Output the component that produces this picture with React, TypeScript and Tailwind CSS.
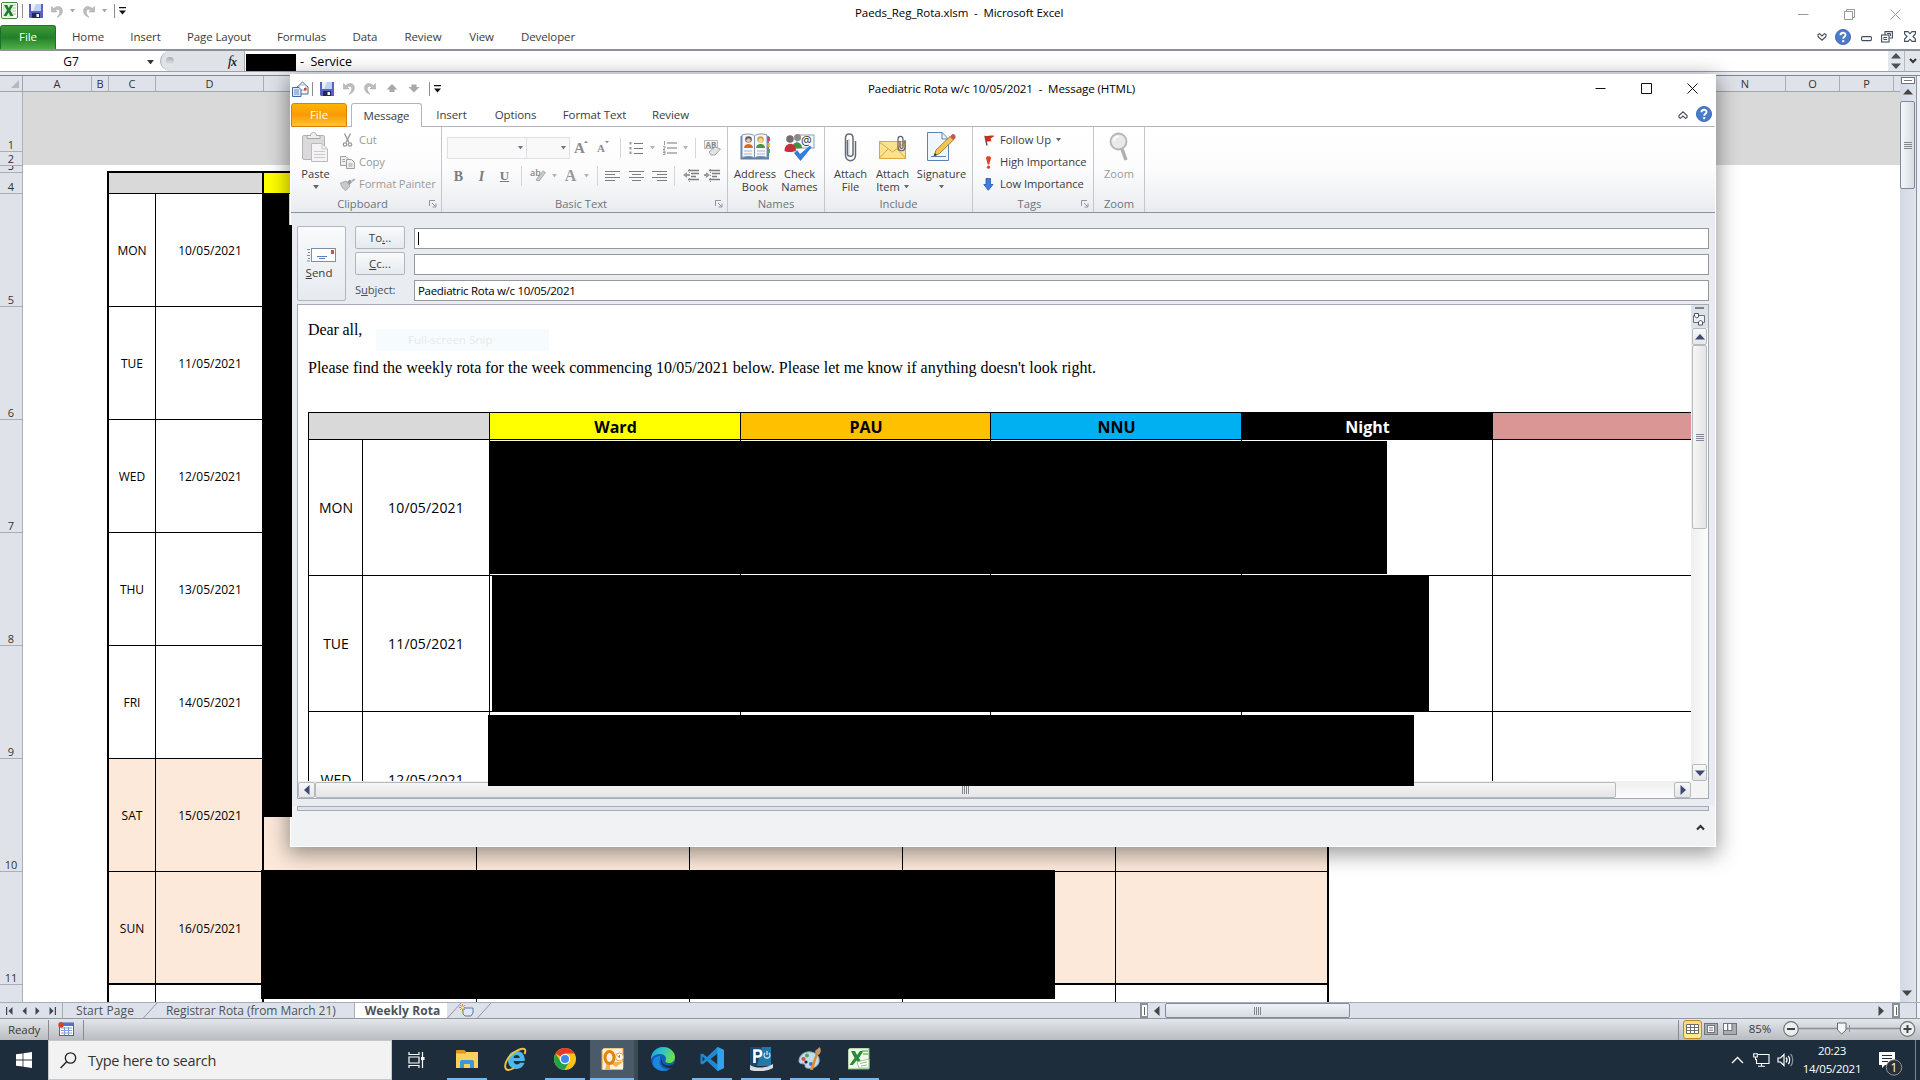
import React from "react";

type Kids = { children?: React.ReactNode };

/* ---------- small shared pieces ---------- */

function Cell({ w, children }: Kids & { w: number }) {
  return (
    <div className="flex h-full shrink-0 items-center justify-center" style={{ width: w }}>
      {children}
    </div>
  );
}

function Down({ color = "#444", w = 6 }: { color?: string; w?: number }) {
  return (
    <svg width={w} height={w / 2 + 1} viewBox="0 0 6 4" className="shrink-0">
      <path d="M0 0H6L3 4Z" fill={color} />
    </svg>
  );
}

function Tri({ dir, color = "#4a4f58", s = 10 }: { dir: "up" | "down" | "left" | "right"; color?: string; s?: number }) {
  const d = { up: "M0 7.500L5 2L10 7.500Z", down: "M0 2.500L5 8L10 2.500Z", left: "M7.500 0L2 5L7.500 10Z", right: "M2.500 0L8 5L2.500 10Z" }[dir];
  return (
    <svg width={s} height={s} viewBox="0 0 10 10" className="shrink-0">
      <path d={d} fill={color} />
    </svg>
  );
}

function Save() {
  return (
    <svg width="14" height="14" viewBox="0 0 14 14" className="shrink-0">
      <path d="M0 0H14V14H1L0 13Z" fill="#5a60c4" />
      <path d="M2 0H12V7H2Z" fill="#e8f0fc" />
      <path d="M7 0H12V7H4Z" fill="#bcd2f2" />
      <path d="M3 9H11V14H3Z" fill="#20265e" />
      <path d="M7.500 10H10V13H7.500Z" fill="#fff" />
    </svg>
  );
}

function Undo({ flip = false }: { flip?: boolean }) {
  return (
    <svg width="12" height="13" viewBox="0 0 12 13" className={flip ? "shrink-0 -scale-x-100" : "shrink-0"}>
      <path d="M.5 1.500V7H6L4.300 5.300C6.500 3.200 8.900 4.200 8.800 7C8.700 9 7.500 10.500 6 12.300C9.500 11.200 11.700 8.500 11.400 5.200C11 1.300 6.300 0 2.700 3.600Z" fill="#bdbdbd" stroke="#a2a2a2" strokeWidth=".5" />
    </svg>
  );
}

function QatMenu() {
  return (
    <svg width="7" height="8" viewBox="0 0 7 8" className="shrink-0">
      <path d="M0 0H7V1.300H0ZM0 3.500H7L3.500 7.500Z" fill="#111" />
    </svg>
  );
}

function VSep({ h = 14, color = "#8d8d8d" }: { h?: number; color?: string }) {
  return <div className="w-px shrink-0" style={{ height: h, background: color }} />;
}

function Help() {
  return (
    <svg width="16" height="16" viewBox="0 0 16 16" className="shrink-0">
      <circle cx="8" cy="8" r="7.600" fill="#4a7bcb" stroke="#3460ae" strokeWidth=".8" />
      <path d="M5.500 6.200C5.500 3 10.500 3 10.500 6C10.500 7.800 8.200 7.800 8.200 9.800" fill="none" stroke="#fff" strokeWidth="1.900" />
      <circle cx="8.200" cy="12.100" r="1.200" fill="#fff" />
    </svg>
  );
}

function Ribbonlet({ up = false }: { up?: boolean }) {
  return (
    <svg width="10" height="8" viewBox="0 0 10 8" className={up ? "shrink-0 rotate-180" : "shrink-0"}>
      <path d="M1 1.500L2.500 0.700L5 3L7.500 0.700L9 1.500V3.500L5 7.200L1 3.500Z" fill="#fff" stroke="#454f5c" strokeWidth="1.100" />
    </svg>
  );
}

function Grip({ vertical = false }: { vertical?: boolean }) {
  return (
    <div className={vertical ? "flex flex-col gap-px" : "flex gap-px"}>
      {[0, 1, 2, 3].map((i) => (
        <div key={i} className={vertical ? "h-px w-2 bg-[#808791]" : "h-2 w-px bg-[#808791]"} />
      ))}
    </div>
  );
}

/* ---------- Excel window ---------- */

function ExcelLogo() {
  return (
    <svg width="17" height="17" viewBox="0 0 17 17" className="shrink-0">
      <rect x=".5" y=".5" width="16" height="16" rx="1.500" fill="#fff" stroke="#3d8a3a" />
      <path d="M2 2H12V15H2Z" fill="#d9efd2" />
      <path d="M12 3H15M12 6H15M12 9H15M12 12H15" stroke="#9ac894" />
      <path d="M3 3H6.200L7.800 6L9.500 3H12.200L9.300 8.200L12.500 14H9.300L7.500 10.600L5.500 14H2.500L6 8.200Z" fill="#1f7a2e" />
    </svg>
  );
}

function ExcelTitle() {
  return (
    <div className="flex h-[25px] items-center bg-white text-[12px]">
      <Cell w={18}><div className="-mt-1"><ExcelLogo /></div></Cell>
      <div className="flex h-full items-center pb-[3px]">
        <Cell w={8}><VSep /></Cell>
        <Cell w={20}><Save /></Cell>
        <Cell w={22}><Undo /></Cell>
        <Cell w={9}><Down color="#a5a5a5" w={5} /></Cell>
        <Cell w={23}><Undo flip /></Cell>
        <Cell w={8}><Down color="#a5a5a5" w={5} /></Cell>
        <Cell w={12}><VSep /></Cell>
        <Cell w={5}><QatMenu /></Cell>
      </div>
      <div className="flex-1 whitespace-pre pl-[730px] text-[11.500px] tracking-[-0.08px] text-black">Paeds_Reg_Rota.xlsm  -  Microsoft Excel</div>
      <div className="flex h-full items-center gap-[35px] pr-[19px] pt-[3px]">
        <svg width="11" height="11" viewBox="0 0 11 11"><path d="M0 5.500H10.500" stroke="#999" /></svg>
        <svg width="11" height="11" viewBox="0 0 11 11"><path d="M.5 2.500H8.500V10.500H.5ZM2.500 2.500V.5H10.500V8.500H8.500" fill="none" stroke="#999" /></svg>
        <svg width="11" height="11" viewBox="0 0 11 11"><path d="M.5 .5L10.500 10.500M10.500 .5L.5 10.500" stroke="#999" /></svg>
      </div>
    </div>
  );
}

const excelTabs: [string, number][] = [
  ["Home", 58], ["Insert", 57], ["Page Layout", 90], ["Formulas", 75], ["Data", 52], ["Review", 64], ["View", 53], ["Developer", 80],
];

function ExcelTabs() {
  return (
    <div className="flex h-6 items-stretch bg-white text-[11.500px] tracking-[-0.1px] text-[#3c3c3c]">
      <div className="flex w-14 items-center justify-center rounded-t-[3px] border border-b-0 border-[#1d6f2b] bg-gradient-to-b from-[#3d9a35] via-[#23802a] to-[#4fae46] pb-px text-white">File</div>
      <div className="w-[3px]" />
      {excelTabs.map(([t, w]) => (
        <Cell key={t} w={w}>{t}</Cell>
      ))}
      <div className="ml-auto flex items-center pr-[4px] pb-px">
        <Ribbonlet />
        <div className="w-[8px]" />
        <Help />
        <div className="w-[10px]" />
        <svg width="11" height="12" viewBox="0 0 11 12"><rect x=".6" y="5.600" width="9.800" height="4" rx="1" fill="#fff" stroke="#454f5c" strokeWidth="1.100" /></svg>
        <div className="w-[9px]" />
        <svg width="12" height="12" viewBox="0 0 12 12"><path d="M4 4V.6H11.400V7H8" fill="#fff" stroke="#454f5c" strokeWidth="1.100" /><rect x=".6" y="4" width="7.400" height="7" fill="#fff" stroke="#454f5c" strokeWidth="1.100" /><rect x="3" y="6.500" width="2.600" height="2" fill="none" stroke="#454f5c" /><path d="M6 2.500H9.500V5" fill="none" stroke="#454f5c" /></svg>
        <div className="w-[11px]" />
        <svg width="12" height="11" viewBox="0 0 12 11"><path d="M.6 .6H4L6 2.800L8 .6H11.400V3L9 5.500L11.400 8V10.400H8L6 8.200L4 10.400H.6V8L3 5.500L.6 3Z" fill="#fff" stroke="#454f5c" strokeWidth="1.100" /></svg>
      </div>
    </div>
  );
}

function FormulaBar() {
  return (
    <div className="flex h-[27px] shrink-0 flex-col border-t-2 border-[#8c9098] bg-[#e8ebf0]">
      <div className="flex h-[21px] items-stretch border-b border-[#9da1a5] bg-white text-[13px] text-black">
        <div className="flex w-[160px] items-center pt-[2px]">
          <div className="w-[147px] pr-[5px] text-center text-[12px]">G7</div>
          <Down color="#333" w={7} />
        </div>
        <div className="flex w-[85px] items-center justify-between rounded-l-[10px] border-x border-[#a8adb4] bg-[#dfe2e7] pl-[5px] pr-[7px]">
          <div className="h-2 w-2 rounded-full bg-gradient-to-b from-[#a9adb3] to-[#e6e8eb]" />
          <div className="font-['Liberation_Serif'] text-[15px] italic leading-none text-[#222]">f<span className="-ml-px text-[12px] font-bold">x</span></div>
        </div>
        <div className="ml-px mt-[3px] h-[17px] w-[50px] bg-black" />
        <div className="flex items-center whitespace-pre pl-[4px] pt-[2px] text-[12.500px]">-  Service</div>
        <div className="ml-auto flex w-4 flex-col items-center justify-between bg-[#e1e5ec]"><Tri dir="up" /><Tri dir="down" /></div>
        <div className="flex w-4 items-center justify-center border-l border-[#b5bac2] bg-[#e1e5ec]">
          <svg width="8" height="6" viewBox="0 0 8 6"><path d="M1 1L4 4L7 1" fill="none" stroke="#333" strokeWidth="2" /></svg>
        </div>
      </div>
    </div>
  );
}

const cols: [string, number][] = [["A", 69], ["B", 17], ["C", 47], ["D", 108]];

function ColumnHeaders() {
  return (
    <div className="flex h-[17px] shrink-0 border-y border-t-[#7f8791] border-b-[#9fa5ad] bg-[#dfe3e9] text-[11px] text-[#333]">
      <div className="flex w-[23px] items-end justify-end border-r border-[#9fa5ad] p-[3px]">
        <svg width="8" height="8" viewBox="0 0 8 8"><path d="M8 0V8H0Z" fill="#b4b9c1" /></svg>
      </div>
      {cols.map(([c, w]) => (
        <div key={c} className="flex items-center justify-center border-r border-[#a9afb7] pt-[2px]" style={{ width: w }}>{c}</div>
      ))}
      <div className="flex-1" />
      <div className="flex w-[81px] items-center justify-center border-r border-[#a9afb7] pt-[2px]">N</div>
      <div className="flex w-[54px] items-center justify-center border-r border-[#a9afb7] pt-[2px]">O</div>
      <div className="flex w-[54px] items-center justify-center border-r border-[#a9afb7] pt-[2px]">P</div>
      <div className="w-[6px]" />
    </div>
  );
}

function RowHead({ n, h }: { n?: string; h: number }) {
  return (
    <div className="flex w-[23px] shrink-0 items-end justify-center overflow-hidden border-b border-r border-[#a9afb7] bg-[#dfe3e9] text-[11px] leading-[13px] text-[#333]" style={{ height: h }}>
      {n}
    </div>
  );
}

const days: { n: string; d: string; date: string; off?: boolean }[] = [
  { n: "5", d: "MON", date: "10/05/2021" },
  { n: "6", d: "TUE", date: "11/05/2021" },
  { n: "7", d: "WED", date: "12/05/2021" },
  { n: "8", d: "THU", date: "13/05/2021" },
  { n: "9", d: "FRI", date: "14/05/2021" },
  { n: "10", d: "SAT", date: "15/05/2021", off: true },
  { n: "11", d: "SUN", date: "16/05/2021", off: true },
];

function Sheet() {
  return (
    <div className="flex-1 overflow-hidden bg-white">
      <div className="flex bg-[#d9d9d9]"><RowHead n="1" h={60} /></div>
      <div className="flex h-[14px]">
        <RowHead n="2" h={14} />
        <div className="h-[13px] flex-1 bg-[#d9d9d9]" />
      </div>
      <div className="flex h-[7px]">
        <RowHead n="3" h={7} />
        <div className="ml-[84px] mt-[5px] w-[1222px] bg-black" />
      </div>
      <div className="flex h-[21px]">
        <RowHead n="4" h={21} />
        <div className="ml-[84px] flex w-[1222px] border-x-2 border-b border-black">
          <div className="w-[155px] border-r-2 border-black bg-[#d9d9d9]" />
          <div className="w-[213px] border-r border-black bg-[#ffff00]" />
          <div className="w-[213px] border-r border-black bg-[#ffc000]" />
          <div className="w-[213px] border-r border-black bg-[#00b0f0]" />
          <div className="flex-1 bg-black" />
        </div>
      </div>
      {days.map((r) => (
        <div key={r.n} className="flex h-[113px]">
          <RowHead n={r.n} h={113} />
          <div className={`ml-[84px] flex w-[1222px] border-x-2 border-black text-[12px] tracking-[0px] text-black ${r.off ? "bg-[#fce9da]" : ""} ${r.n === "11" ? "border-b-2" : "border-b"}`}>
            <div className="flex w-[47px] items-center justify-center border-r border-black pt-[2px]">{r.d}</div>
            <div className="flex w-[108px] items-center justify-center border-r-2 border-black pl-[2px] pt-[2px]">{r.date}</div>
            <div className="w-[213px] border-r border-black" />
            <div className="w-[213px] border-r border-black" />
            <div className="w-[213px] border-r border-black" />
            <div className="w-[213px] border-r border-black" />
          </div>
        </div>
      ))}
      <div className="flex h-[20px]">
        <RowHead h={20} />
        <div className="ml-[84px] flex w-[1222px] border-x-2 border-black">
          <div className="w-[47px] border-r border-black" />
          <div className="w-[108px] border-r-2 border-black" />
          <div className="w-[213px] border-r border-black" />
          <div className="w-[213px] border-r border-black" />
          <div className="w-[213px] border-r border-black" />
          <div className="w-[213px] border-r border-black" />
        </div>
      </div>
    </div>
  );
}

function ExcelVScroll() {
  return (
    <div className="flex w-5 shrink-0 border-t border-[#7f8791] bg-[#eff1f4]">
      <div className="flex w-[17px] flex-col items-center border-r border-[#8b93a3] bg-gradient-to-r from-[#d3d9e4] to-[#dfe3ec]">
        <div className="mt-px h-[7px] w-[14px] border border-[#6f7680] bg-white"><div className="mx-[2px] mt-[2px] h-px bg-[#777]" /></div>
        <div className="mt-[3px] h-[14px]"><Tri dir="up" color="#444" /></div>
        <div className="flex h-[88px] w-[15px] items-center justify-center self-start rounded-[2px] border border-[#7f8a9c] bg-gradient-to-r from-[#f4f6f9] to-[#d8dce3]"><Grip vertical /></div>
        <div className="mb-1 mt-auto pr-[2px]"><Tri dir="down" color="#444" /></div>
      </div>
    </div>
  );
}

function SheetNav({ d, bar }: { d: "left" | "right"; bar?: boolean }) {
  return (
    <svg width="8" height="8" viewBox="0 0 8 8" className={d === "left" ? "shrink-0" : "shrink-0 rotate-180"}>
      <path d="M6.500 0V8L2.500 4Z" fill="#3f4650" />
      {bar && <path d="M.6 0V8" stroke="#3f4650" strokeWidth="1.200" />}
    </svg>
  );
}

function TabEdge() {
  return (
    <svg width="14" height="16" viewBox="0 0 14 16" className="shrink-0">
      <path d="M0 15.500L14 0" stroke="#8e96a3" fill="none" />
    </svg>
  );
}

function SheetTabs() {
  return (
    <div className="flex h-[16px] shrink-0 items-stretch border-t border-[#a5adb9] bg-[#dde2ea] text-[12px] text-[#4d5259]">
      <div className="flex w-[63px] items-center justify-between border-r border-[#a5adb9] pl-[6px] pr-[6px]">
        <SheetNav d="left" bar /><SheetNav d="left" /><SheetNav d="right" /><SheetNav d="right" bar />
      </div>
      <div className="flex w-[80px] items-center pl-[13px] tracking-[0.1px]"><span className="whitespace-nowrap">Start Page</span></div>
      <TabEdge />
      <div className="flex w-[198px] items-center border-r border-[#a5adb9] pl-[9px]"><span className="whitespace-nowrap tracking-[-0.07px]">Registrar Rota (from March 21)</span></div>
      <div className="flex w-[92px] items-center justify-center bg-white pl-[3px] font-bold"><span className="whitespace-nowrap tracking-[0.1px]">Weekly Rota</span></div>
      <TabEdge />
      <svg width="16" height="14" viewBox="0 0 16 14" className="ml-[-2px] mt-px">
        <path d="M4 4H14V9L12 12H6L4 10Z" fill="#dfe8f7" stroke="#5d79ad" />
        <path d="M3.500 0V7M0 3.500H7M1 1L6 6M6 1L1 6" stroke="#d98d1c" />
        <circle cx="3.500" cy="3.500" r="1.200" fill="#fff3c8" />
      </svg>
      <div className="w-[2px]" />
      <TabEdge />
      <div className="flex-1" />
      <div className="flex w-[8px] items-center justify-center border-2 border-r border-[#8b8f99] bg-white"><div className="h-2 w-px bg-[#666]" /></div>
      <div className="flex w-[17px] items-center justify-center"><Tri dir="left" color="#444" /></div>
      <div className="flex w-[185px] items-center justify-center rounded-[2px] border border-[#7f8a9c] bg-gradient-to-b from-[#eef3f8] to-[#d8dbe2]"><Grip /></div>
      <div className="w-[526px]" />
      <div className="flex w-[16px] items-center"><Tri dir="right" color="#444" /></div>
      <div className="flex w-[8px] items-center justify-center border-2 border-[#8b8f99] bg-white"><div className="h-2 w-px bg-[#666]" /></div>
      <div className="w-[17px] border-r border-[#8b93a3]" />
      <div className="w-[3px] bg-[#eff1f4]" />
    </div>
  );
}

function StatusBar() {
  return (
    <div className="flex h-[22px] shrink-0 items-center border-t border-[#8f97a3] bg-gradient-to-b from-[#e3e6ea] to-[#b9bdc2] text-[11.500px] tracking-[-0.1px] text-[#3a3a3a]">
      <div className="w-[48px] pl-2">Ready</div>
      <VSep h={20} color="#858b92" />
      <div className="flex w-[34px] justify-center pb-px">
        <svg width="16" height="14" viewBox="0 0 16 14"><rect x="1.500" y="1" width="14" height="12.500" fill="#fff" stroke="#3f69b3" /><path d="M1.500 1H15.500V4H1.500Z" fill="#4b78c4" /><path d="M3 6H14M3 8.500H14M3 11H14M6.500 5V13M10.500 5V13" stroke="#7f9fd3" /><circle cx="3" cy="3" r="2.700" fill="#d5431f" /></svg>
      </div>
      <VSep h={20} color="#858b92" />
      <div className="flex-1" />
      <VSep h={20} color="#858b92" />
      <div className="flex items-center pb-px">
        <div className="ml-[4px] flex h-[19px] w-[19px] items-center justify-center rounded-[3px] border border-[#c0882a] bg-gradient-to-b from-[#fbd777] to-[#fff08a]">
          <svg width="13" height="10" viewBox="0 0 13 10"><path d="M.5 .5H12.500V9.500H.5ZM.5 3.500H12.500M.5 6.500H12.500M4.500 .5V9.500M8.500 .5V9.500" fill="#fff" stroke="#6c6c6c" /></svg>
        </div>
        <svg width="14" height="12" viewBox="0 0 14 12" className="ml-[2px]"><rect x=".5" y=".5" width="13" height="11" fill="#a9adb2" stroke="#70757b" /><rect x="3.500" y="2.500" width="7" height="7" fill="#fff" stroke="#70757b" /><path d="M5 4.500H9M5 6H9M5 7.500H9" stroke="#888" strokeWidth=".8" /></svg>
        <svg width="14" height="12" viewBox="0 0 14 12" className="ml-[5px]"><rect x=".5" y=".5" width="13" height="11" fill="#a9adb2" stroke="#70757b" /><path d="M1 1H4V7H1ZM5.500 1H8.500V7H5.500Z" fill="#fff" /><path d="M4.500 1V7.500M9 1V7.500H1" stroke="#70757b" fill="none" /></svg>
        <div className="w-[46px] text-center">85%</div>
        <svg width="137" height="18" viewBox="0 0 137 18" className="shrink-0">
          <path d="M16 8.500H118" stroke="#8c9098" strokeWidth="1.400" /><path d="M66.500 5V12" stroke="#8c9098" />
          <circle cx="8" cy="9" r="7.300" fill="#eceef0" stroke="#6f747a" strokeWidth="1.200" /><path d="M4 9H12" stroke="#444" strokeWidth="2" />
          <path d="M54.500 3H63V10L58.700 14L54.500 10Z" fill="#f4f5f6" stroke="#63686e" />
          <circle cx="124.500" cy="9" r="7.300" fill="#eceef0" stroke="#6f747a" strokeWidth="1.200" /><path d="M120.500 9H128.500M124.500 5V13" stroke="#444" strokeWidth="2" />
        </svg>
      </div>
    </div>
  );
}

/* ---------- Taskbar ---------- */

function TaskIcon({ w, children, bar, active }: Kids & { w: number; bar?: number; active?: boolean }) {
  return (
    <div className={`flex h-full flex-col items-center ${active ? "bg-[#4b5a68]" : ""}`} style={{ width: w }}>
      <div className="flex flex-1 items-center justify-center">{children}</div>
      <div className={bar ? "h-[2px] bg-[#76b9ed]" : "h-[2px]"} style={{ width: bar ?? 1 }} />
    </div>
  );
}

function Taskbar() {
  return (
    <div className="flex h-[40px] shrink-0 items-stretch bg-[#1e2d3c] text-white">
      <Cell w={48}>
        <svg width="16" height="16" viewBox="0 0 16 16"><path d="M0 2.300L6.600 1.400V7.600H0ZM7.400 1.300L16 0V7.600H7.400ZM0 8.400H6.600V14.600L0 13.700ZM7.400 8.400H16V16L7.400 14.700Z" fill="#fff" /></svg>
      </Cell>
      <div className="flex w-[344px] items-center border border-[#c5c8cb] bg-[#f2f2f2]">
        <svg width="17" height="17" viewBox="0 0 17 17" className="ml-[11px]"><circle cx="10.500" cy="6" r="5.200" fill="none" stroke="#222" strokeWidth="1.300" /><path d="M6.700 9.800L.6 16" stroke="#222" strokeWidth="1.400" /></svg>
        <div className="ml-[11px] pt-[2px] text-[14.500px] tracking-[-0.28px] text-[#333]">Type here to search</div>
      </div>
      <Cell w={48}>
        <svg width="17" height="16" viewBox="0 0 17 16" fill="none" stroke="#fff" strokeWidth="1.200"><path d="M1 0V2.500H11V0M1 16V13.500H11V16M1 5H11V11H1ZM14.500 0V16" /><path d="M13 5H16.500V8H13Z" fill="#fff" stroke="none" /></svg>
      </Cell>
      <div className="w-[7px]" />
      <TaskIcon w={40} bar={40}>
        <svg width="22" height="18" viewBox="0 0 22 18"><path d="M0 1L1 0H8L10 2H22V18H0Z" fill="#fbd15b" /><path d="M0 1L1 0H8L10 2V3.500H0Z" fill="#d79b1e" /><path d="M4 18V11L5.500 10H16.500L18 11V18H14V14H8V18Z" fill="#3f97d8" /></svg>
      </TaskIcon>
      <div className="w-[9px]" />
      <TaskIcon w={40}>
        <svg width="24" height="24" viewBox="0 0 24 24"><path d="M4 13C4 7 8 4 12.500 4C18 4 21 8 20.800 14H9.500C9.800 18 14.500 18.500 16 15.800H20.500C19 20 16 22 12.500 22C7.500 22 4 18.500 4 13ZM9.500 11H15.800C15.500 7 9.800 7 9.500 11Z" fill="#4db8ee" /><path d="M20.500 7C24 -1 16 1.500 10 5.500C3 10.500 -.5 18 2 22C4.500 24.500 9 21.500 10 21" fill="none" stroke="#f1c33c" strokeWidth="1.900" /></svg>
      </TaskIcon>
      <div className="w-[9px]" />
      <TaskIcon w={40} bar={40}>
        <svg width="22" height="22" viewBox="0 0 22 22"><circle cx="11" cy="11" r="11" fill="#fbc116" /><path d="M11 11L1.500 5.500A11 11 0 0 1 20.500 5.500H11Z" fill="#e33b2e" /><path d="M1.500 5.500A11 11 0 0 0 10.300 22L15.500 13.500L6.500 13.500Z" fill="#24a04b" /><circle cx="11" cy="11" r="5.200" fill="#fff" /><circle cx="11" cy="11" r="4" fill="#4285f4" /></svg>
      </TaskIcon>
      <div className="w-[5px]" />
      <TaskIcon w={44} bar={44} active>
        <svg width="23" height="22" viewBox="0 0 23 22"><path d="M1 2L3 0H22V20L20 22H1Z" fill="#f7efe0" stroke="#e2a233" /><path d="M6 14H22V22H4Z" fill="#f3b24a" /><path d="M9 15L15 19L22 14V21H9Z" fill="#fff5dd" /><ellipse cx="8.500" cy="9.500" rx="4.500" ry="6" fill="none" stroke="#e08412" strokeWidth="3" /><circle cx="18.500" cy="9" r="4" fill="#fff" stroke="#e2a233" /><path d="M18.500 7V9.500L16.500 8" fill="none" stroke="#c27a15" /></svg>
      </TaskIcon>
      <div className="w-1 bg-[#3d4a56]" />
      <div className="w-[5px]" />
      <TaskIcon w={40}>
        <svg width="24" height="24" viewBox="0 0 24 24"><defs><linearGradient id="eg" x1="0" y1="0" x2="1" y2=".4"><stop offset="0" stopColor="#1b9de2" /><stop offset=".5" stopColor="#2fc3c8" /><stop offset="1" stopColor="#6be04a" /></linearGradient></defs><circle cx="12" cy="12" r="12" fill="#0f5fb8" /><path d="M0 11C1 4 6 0 12 0C19 0 24 5 24 10C24 14 21 16 18 16C15 16 14 15 14.500 13.500C16 11 14 7 9.500 7C5 7 1.500 9 0 12Z" fill="url(#eg)" /><path d="M9 12C7 17 11 23 18 22.500C14 25 5 24 2 18C1 11 6 8.500 9.500 9C8 10 9 11 9 12Z" fill="#1c86dc" /><path d="M11 11C10 13 11 18 16 18.500C19 18.700 21 18 22.500 17L23.500 18L20 21C16 21 15 20.500 14.500 20C10 18 9 14 11 11Z" fill="#1e2d3c" /></svg>
      </TaskIcon>
      <div className="w-[9px]" />
      <TaskIcon w={40} bar={40}>
        <svg width="24" height="24" viewBox="0 0 24 24"><path d="M17.500 0L24 3V21L17.500 24L7 14L2.500 17.500L.5 16.500V7.500L2.500 6.500L7 10ZM17.500 6.500L10.500 12L17.500 17.500ZM2.500 9.500V14.500L5 12Z" fill="#1f8ad2" fillRule="evenodd" /><path d="M17.500 0L24 3V21L17.500 24Z" fill="#2fa3f0" /></svg>
      </TaskIcon>
      <div className="w-[9px]" />
      <TaskIcon w={40} bar={40}>
        <svg width="24" height="24" viewBox="0 0 24 24"><path d="M1 0H22V19H1Z" fill="#2577a8" /><path d="M1 0H13L8 19H1Z" fill="#154a72" /><path d="M1 18C8 22 18 21 24 17V21C17 25 6 25 1 23Z" fill="#d8dcdf" /><path d="M5.500 16V3.500H9.500C13 3.500 13 9.500 9.500 9.500H6" fill="none" stroke="#fff" strokeWidth="2.600" /><path d="M16 6A3 3 0 1 0 20 6M18 4V8" fill="none" stroke="#c3e2f2" strokeWidth="1.300" /></svg>
      </TaskIcon>
      <div className="w-[9px]" />
      <TaskIcon w={40} bar={40}>
        <svg width="24" height="24" viewBox="0 0 24 24"><path d="M1 14C1 8 7 4 13 5C19 6 22 10 21 15C20 20 14 22 9 21C6 20.500 8 17.500 6 17C4 16.500 1 17 1 14Z" fill="#bfdcec" stroke="#8fb0c6" /><circle cx="5.500" cy="12" r="2" fill="#e04a3a" /><circle cx="9" cy="8.500" r="2" fill="#56a93f" /><circle cx="8" cy="15" r="1.600" fill="#223" /><circle cx="13" cy="17" r="2" fill="#3277cf" /><path d="M12 23L18 6L20 7L15 23Z" fill="#e08a2b" /><path d="M17.500 6C16 2 20 3 21 0C24 2 23 6 20.500 8Z" fill="#c59a6b" /></svg>
      </TaskIcon>
      <div className="w-[9px]" />
      <TaskIcon w={40} bar={40}>
        <svg width="22" height="22" viewBox="0 0 22 22"><path d="M0 2L2 0H21V21H0Z" fill="#eef7ea" stroke="#7cb86c" /><path d="M3 3H7L9 7L12 3H15.500L11 10L15 17H11L8.500 12.500L5 17H1.500L6.500 10Z" fill="#2b8a37" /><path d="M14 3H20M15 6H20" stroke="#7cb86c" strokeWidth="1.500" /><path d="M9 14L21 11V20H11Z" fill="#fff" stroke="#9cc791" /><path d="M12 15.500L19 14M13 18L19 17" stroke="#8fbf84" /></svg>
      </TaskIcon>
      <div className="flex-1" />
      <svg width="13" height="8" viewBox="0 0 13 8" className="mt-[16px]"><path d="M1 7L6.500 1.500L12 7" fill="none" stroke="#fff" strokeWidth="1.400" /></svg>
      <svg width="17" height="14" viewBox="0 0 17 14" className="ml-[9px] mt-[13px]" fill="none" stroke="#fff" strokeWidth="1.100"><path d="M5 1.500H16V10.500H3.500V6M8.500 10.500V13M5 13.300H12" /><path d="M.7 .7H4.300V4H.7ZM2.500 4V7" /></svg>
      <svg width="17" height="14" viewBox="0 0 17 14" className="ml-[7px] mt-[13px]" fill="none" stroke="#fff" strokeWidth="1.200"><path d="M1 5H3.500L7 1.500V12.500L3.500 9H1Z" /><path d="M9 4.500C10.300 6 10.300 8 9 9.500M11.200 2.800C13.200 5 13.200 9 11.200 11.200" /><path d="M13.500 1C16.500 4 16.500 10 13.500 13" stroke="#8a949d" /></svg>
      <div className="ml-[8px] flex w-[60px] flex-col items-center pt-[2px] text-[11.500px] leading-[18px] tracking-[-0.25px]"><span>20:23</span><span>14/05/2021</span></div>
      <svg width="26" height="26" viewBox="0 0 26 26" className="ml-[16px] mt-[11px]"><path d="M1 1H17V14H7L4 17V14H1Z" fill="#fff" /><path d="M4 4.500H14M4 7.500H14M4 10.500H10" stroke="#1e2d3c" /><circle cx="16" cy="16.500" r="7.700" fill="#2b2f33" stroke="#8d949a" /><text x="16" y="20.800" textAnchor="middle" fontSize="12" fill="#fff">1</text></svg>
      <div className="ml-[11px] w-px bg-[#7d8790]" />
      <div className="w-1" />
    </div>
  );
}

/* ---------- Outlook message window ---------- */

function MsgTitle() {
  return (
    <div className="flex h-[29px] shrink-0 items-center">
      <Cell w={18}>
        <svg width="17" height="16" viewBox="0 0 17 16"><path d="M5 6L10.500 1L16 6V13H5Z" fill="#f3f7fc" stroke="#4f6a93" /><path d="M7 4H14V9H7Z" fill="#fff" stroke="#9bb0cd" /><path d="M.5 6.500H7L9 8.500V15.500H.5Z" fill="#dbe8f8" stroke="#4467a0" /><path d="M2 9H7M2 11H7M2 13H7" stroke="#6e8cc0" /><rect x="12" y="7" width="2.500" height="2.500" fill="#d44b2a" /></svg>
      </Cell>
      <Cell w={6}><VSep /></Cell>
      <Cell w={24}><Save /></Cell>
      <Cell w={20}><Undo /></Cell>
      <Cell w={22}><Undo flip /></Cell>
      <Cell w={22}><svg width="12" height="9" viewBox="0 0 12 9"><path d="M6 0L11.500 5.500H8.500V8H3.500V5.500H.5Z" fill="#a9a9a9" /></svg></Cell>
      <Cell w={22}><svg width="12" height="9" viewBox="0 0 12 9"><path d="M6 8.500L11.500 3H8.500V.5H3.500V3H.5Z" fill="#a9a9a9" /></svg></Cell>
      <Cell w={9}><VSep /></Cell>
      <Cell w={7}><QatMenu /></Cell>
      <div className="flex-1 whitespace-pre pl-[427px] text-[11.600px] tracking-[-0.1px] text-black">Paediatric Rota w/c 10/05/2021  -  Message (HTML)</div>
      <div className="flex gap-[35px] pr-[17px]">
        <svg width="11" height="11" viewBox="0 0 11 11"><path d="M.5 5.500H10.500" stroke="#111" /></svg>
        <svg width="11" height="11" viewBox="0 0 11 11"><path d="M.5 .5H10.500V10.500H.5Z" fill="none" stroke="#111" /></svg>
        <svg width="11" height="11" viewBox="0 0 11 11"><path d="M.5 .5L10.500 10.500M10.500 .5L.5 10.500" stroke="#111" /></svg>
      </div>
    </div>
  );
}

function MsgTabs() {
  return (
    <div className="flex h-[24px] shrink-0 items-stretch text-[11.500px] text-[#3c3c3c]">
      <div className="flex w-[56px] items-center justify-center rounded-t-[3px] border border-[#de7c0c] bg-gradient-to-b from-[#fcb500] via-[#f99a06] to-[#ffc629] text-white">File</div>
      <div className="w-1 border-b border-[#b2b5b9]" />
      <div className="flex w-[71px] items-center justify-center rounded-t-[3px] border border-b-0 border-[#b2b5b9]"><span className="tracking-[-0.15px]">Message</span></div>
      <div className="flex flex-1 items-center border-b border-[#b2b5b9] tracking-[-0.1px]">
        <Cell w={59}>Insert</Cell>
        <Cell w={69}>Options</Cell>
        <Cell w={89}>Format Text</Cell>
        <Cell w={63}>Review</Cell>
        <div className="flex-1" />
        <Ribbonlet up />
        <div className="w-[8px]" />
        <div className="-mt-[2px]"><Help /></div>
        <div className="w-[3px]" />
      </div>
    </div>
  );
}

function Launcher() {
  return (
    <svg width="8" height="8" viewBox="0 0 8 8" className="shrink-0"><path d="M.5 6V.5H6M3 3L6.500 6.500M7 3.500V7H3.500" fill="none" stroke="#8f959c" /></svg>
  );
}

function Group({ w, label, launcher, children }: Kids & { w: number; label: string; launcher?: boolean }) {
  return (
    <div className="flex h-full shrink-0 flex-col border-r border-[#c3c7cc]" style={{ width: w }}>
      <div className="flex h-[69px]">{children}</div>
      <div className="flex h-[16px] items-center text-[11.200px] text-[#6b7380]">
        <div className={launcher ? "flex-1 pr-[4px] text-center" : "flex-1 text-center"}>{label}</div>
        {launcher && <div className="ml-[-9px] mr-[4px]"><Launcher /></div>}
      </div>
    </div>
  );
}

function Big({ w, icon, a, b, grey }: { w: number; icon: React.ReactNode; a: string; b?: React.ReactNode; grey?: boolean }) {
  return (
    <div className={`flex flex-col items-center text-[11.100px] leading-[13px] tracking-[0px] ${grey ? "text-[#9a9a9a]" : "text-[#3b3b3b]"}`} style={{ width: w }}>
      <div className="flex h-[40px] items-center justify-center">{icon}</div>
      <div className="whitespace-nowrap">{a}</div>
      <div className="flex h-[13px] items-center gap-1">{b}</div>
    </div>
  );
}

function Clip({ w = 13, h = 30 }: { w?: number; h?: number }) {
  return (
    <svg width={w} height={h} viewBox="0 0 13 30"><path d="M3.500 8V22C3.500 25 9 25 9 22V6C9 .5 1.500 .5 1.500 6V23C1.500 30.500 11.500 30.500 11.500 23V9" fill="none" stroke="#666c74" strokeWidth="1.500" /><path d="M5 7V21" stroke="#c6cad0" /></svg>
  );
}

function Lines({ kind }: { kind: "left" | "center" | "right" }) {
  const d = {
    left: "M0 .5H15M0 3.500H10M0 6.500H15M0 9.500H10",
    center: "M0 .5H15M3 3.500H12M0 6.500H15M3 9.500H12",
    right: "M0 .5H15M5 3.500H15M0 6.500H15M5 9.500H15",
  }[kind];
  return <svg width="15" height="11" viewBox="0 0 15 11"><path d={d} stroke="#7e7e7e" /></svg>;
}

function Indent({ out }: { out?: boolean }) {
  return (
    <svg width="16" height="14" viewBox="0 0 16 14"><path d="M5 1.500H16M8 4.500H16M8 7.500H13M5 10.500H16" stroke="#7e7e7e" strokeWidth="1.300" /><path d="M6.500 0V14" stroke="#8e8e8e" strokeDasharray="1 2" /><path d={out ? "M4 3L0 6L4 9V7H7V5H4Z" : "M2 3L6 6L2 9V7H0V5H2Z"} fill="#9a9a9a" /></svg>
  );
}

function RibSep() {
  return <div className="h-[20px] w-px bg-[#d3d6da]" />;
}

function Ribbon() {
  return (
    <div className="flex h-[86px] shrink-0 border-b border-[#8a929b] bg-gradient-to-b from-white via-[#fcfcfd] to-[#e9ecef]">
      <Group w={151} label="Clipboard" launcher>
        <Big w={49} a="Paste" b={<Down color="#666" />} icon={
          <svg width="27" height="31" viewBox="0 0 27 31"><rect x=".5" y="3.500" width="22" height="24" rx="1.500" fill="#dcd9dc" stroke="#b5b2b5" /><path d="M5 6.500V3.500H8.500C8.500 -.5 14.500 -.5 14.500 3.500H18V6.500Z" fill="#f0eff0" stroke="#a7a7a7" /><path d="M9.500 11.500H20L25.500 17V29.500H9.500Z" fill="#f5f4f5" stroke="#bdbabd" /><path d="M20 11.500V17H25.500M12 19.500H23M12 22.500H23M12 25.500H23" fill="none" stroke="#cbc8cb" /></svg>} />
        <div className="flex flex-col pt-[2px] text-[11.200px] tracking-[-0.1px] text-[#9a9a9a]">
          <div className="flex h-[22px] items-center">
            <svg width="11" height="15" viewBox="0 0 11 15" fill="none" stroke="#9a9a9a" className="ml-[2px] mr-[6px]"><path d="M2.500 .5L7 9.500M8.500 .5L4 9.500" strokeWidth="1.400" /><circle cx="3" cy="11.500" r="1.700" strokeWidth="1.300" /><circle cx="8" cy="11.500" r="1.700" strokeWidth="1.300" /></svg>Cut
          </div>
          <div className="flex h-[22px] items-center">
            <svg width="15" height="13" viewBox="0 0 15 13" fill="#eee" stroke="#9f9f9f" className="mr-[4px]"><path d="M.5 .5H6L8.500 3V9.500H.5Z" /><path d="M6.500 3.500H11.500L14.500 6.500V12.500H6.500ZM8.500 8H12.500M8.500 10H12.500M2.500 3.500H5M2.500 5.500H5" /></svg>Copy
          </div>
          <div className="flex h-[22px] items-center">
            <svg width="16" height="13" viewBox="0 0 16 13" className="mr-[3px]"><path d="M.5 5L6 3L10 8L6 12.500Q2 11 .5 5Z" fill="#c9c9c9" stroke="#aaa" /><path d="M7 4L10 1.500L12 4L9.500 7Z" fill="#9a9a9a" /><path d="M11 2L14.500 .5L15.500 2L12.500 4Z" fill="#b7b7b7" /></svg><span className="whitespace-nowrap">Format Painter</span>
          </div>
        </div>
      </Group>
      <Group w={286} label="Basic Text" launcher>
        <div className="flex flex-col pl-[5px] pt-[9px]">
          <div className="flex h-[24px] items-center">
            <div className="flex h-[22px] w-[80px] items-center justify-end border border-[#dcdfe3] bg-[#f9f9fa] pr-[3px]"><Down color="#777" w={5} /></div>
            <div className="flex h-[22px] w-[43px] items-center justify-end border border-l-0 border-[#dcdfe3] bg-[#f9f9fa] pr-[3px]"><Down color="#777" w={5} /></div>
            <Cell w={22}><span className="font-['Liberation_Serif'] text-[15px] font-bold leading-none text-[#8c8c8c]">A</span><span className="-ml-px -mt-3"><Tri dir="up" s={4} color="#8c8c8c" /></span></Cell>
            <Cell w={22}><span className="font-['Liberation_Serif'] text-[11px] font-bold leading-none text-[#8c8c8c]">A</span><span className="-mt-3"><Tri dir="down" s={4} color="#8c8c8c" /></span></Cell>
            <Cell w={12}><RibSep /></Cell>
            <Cell w={20}><svg width="14" height="12" viewBox="0 0 14 12"><path d="M5 1.500H14M5 6.500H14M5 11.500H14" stroke="#777" /><path d="M.5 0H2.500V2.500H.5ZM.5 5H2.500V7.500H.5ZM.5 9.500H2.500V12H.5Z" fill="#999" /></svg></Cell>
            <Cell w={12}><Down color="#b5b5b5" w={5} /></Cell>
            <Cell w={22}><svg width="15" height="14" viewBox="0 0 15 14"><path d="M5 2H15M5 7H15M5 12H15" stroke="#777" /><path d="M2.500 0V4M1 5.500H3V7L1 8.500H3M1 10H3V13.500H1M1 11.500H3" stroke="#888" fill="none" strokeWidth=".8" /></svg></Cell>
            <Cell w={10}><Down color="#b5b5b5" w={5} /></Cell>
            <Cell w={10}><RibSep /></Cell>
            <Cell w={24}><svg width="17" height="16" viewBox="0 0 17 16"><rect x=".5" y=".5" width="13" height="8" fill="#f3f3f3" stroke="#bbb" /><text x="7" y="7.600" textAnchor="middle" fontSize="8" fontWeight="bold" fill="#888">AB</text><path d="M5 12L11 7L16.500 9L11 15L7 15Z" fill="#e4e4e4" stroke="#a5a5a5" /></svg></Cell>
          </div>
          <div className="mt-[4px] flex h-[24px] items-center font-['Liberation_Serif'] text-[#7c7c7c]">
            <Cell w={23}><b className="text-[14px]">B</b></Cell>
            <Cell w={23}><i className="text-[14px] font-bold">I</i></Cell>
            <Cell w={23}><b className="text-[13px] underline">U</b></Cell>
            <Cell w={10}><RibSep /></Cell>
            <Cell w={24}><svg width="16" height="14" viewBox="0 0 16 14"><text x="0" y="7" fontSize="9" fontFamily="Open Sans" fontWeight="600" fill="#888">ab</text><path d="M6 11L13 2L15.500 3.500L9 12Z" fill="#ccc" stroke="#999" strokeWidth=".8" /></svg></Cell>
            <Cell w={9}><Down color="#b5b5b5" w={5} /></Cell>
            <Cell w={23}><b className="text-[16px] text-[#999]">A</b></Cell>
            <Cell w={8}><Down color="#b5b5b5" w={5} /></Cell>
            <Cell w={14}><RibSep /></Cell>
            <Cell w={17}><Lines kind="left" /></Cell>
            <Cell w={30}><Lines kind="center" /></Cell>
            <Cell w={17}><Lines kind="right" /></Cell>
            <Cell w={13}><RibSep /></Cell>
            <Cell w={19}><Indent out /></Cell>
            <Cell w={24}><Indent /></Cell>
          </div>
        </div>
      </Group>
      <Group w={97} label="Names">
        <div className="w-[4px]" />
        <Big w={46} a="Address" b="Book" icon={
          <svg width="30" height="28" viewBox="0 0 30 28"><path d="M.5 3H29V26.500H.5Z" fill="#5f80a8" /><path d="M2 2C7 .5 12 .5 14.500 3V25C12 23 7 23 2 24.500ZM27 2C22 .5 17 .5 14.500 3V25C17 23 22 23 27 24.500Z" fill="#f4f7fb" stroke="#7d94b3" /><circle cx="8.500" cy="6.500" r="3.300" fill="#5a5a5a" /><circle cx="8.500" cy="7.500" r="2.200" fill="#eec39a" /><path d="M4 15C4 9.500 13 9.500 13 15Z" fill="#dd6a1e" /><circle cx="20.500" cy="6.500" r="3.300" fill="#d2a437" /><circle cx="20.500" cy="7.500" r="2.200" fill="#f3d2ad" /><path d="M16 15C16 9.500 25 9.500 25 15Z" fill="#4a9a3c" /><path d="M4 18H12M4 21H12M17 18H25M17 21H25" stroke="#a9b7ca" /><path d="M27.500 4H30V8H27.500Z" fill="#dc4a30" /><path d="M27.500 10H30V14H27.500Z" fill="#e8b73a" /><path d="M27.500 16H30V20H27.500Z" fill="#57a846" /></svg>} />
        <Big w={43} a="Check" b="Names" icon={
          <svg width="31" height="28" viewBox="0 0 31 28"><rect x="13" y="2" width="17" height="13" fill="#f5f8fb" stroke="#8aa0bd" /><text x="22.500" y="12" textAnchor="middle" fontSize="12" fill="#333">@</text><circle cx="13.500" cy="4.500" r="3.500" fill="#8a8a8a" /><path d="M8 16C8 7 18 8 18 15Z" fill="#3d9440" /><circle cx="6" cy="6" r="3.800" fill="#707070" /><path d="M.5 18C.5 8.500 12 8.500 12 17.500C9 19.500 3 19.500 .5 18Z" fill="#c5303a" /><path d="M10.500 20L13 17.500L16 21.500L26 13L27 14.500L16.500 27.500Z" fill="#2f7fe0" stroke="#1d5cb4" strokeWidth=".6" /></svg>} />
      </Group>
      <Group w={148} label="Include">
        <div className="w-[5px]" />
        <Big w={41} a="Attach" b="File" icon={<Clip />} />
        <Big w={43} a="Attach" b={<><span>Item</span><Down color="#666" w={5} /></>} icon={
          <svg width="28" height="26" viewBox="0 0 28 26"><rect x=".5" y="7.500" width="26" height="17" fill="#fbe290" stroke="#d8a83c" /><path d="M.5 8L13.500 18L26.500 8M.5 24L9 15M26.500 24L18 15" fill="none" stroke="#d8a83c" /><path d="M21 7V13C21 15 24 15 24 13V5C24 1.500 19 1.500 19 5V13C19 18 26 18 26 13V6" fill="none" stroke="#55606c" strokeWidth="1.200" /></svg>} />
        <Big w={55} a="Signature" b={<Down color="#666" w={5} />} icon={
          <svg width="29" height="30" viewBox="0 0 29 30"><path d="M.5 .5H15L21.500 7V28.500H.5Z" fill="#f1f6fc" stroke="#5c81b5" /><path d="M15 .5V7H21.500M4 24.500H19" fill="none" stroke="#5c81b5" /><path d="M7 24L9 18L23 4.500L26.500 8L12.500 21.500Z" fill="#f3c653" stroke="#8c6a22" strokeWidth=".8" /><path d="M7 24L8 21L10 23Z" fill="#333" /><path d="M23 4.500L25.500 2C28 2 29 4 28.500 6L26.500 8Z" fill="#c4574f" /></svg>} />
      </Group>
      <Group w={121} label="Tags" launcher>
        <div className="flex flex-col pl-[10px] pt-[2px] text-[11.200px] tracking-[-0.05px] text-[#3b3b3b]">
          <div className="flex h-[22px] items-center"><svg width="12" height="11" viewBox="0 0 12 11" className="mr-[5px]"><path d="M2 1L4 10.500" stroke="#555" strokeWidth="1.400" /><path d="M1.500 .5C5 2 7 -.5 11.500 1L7.500 3.500L8.500 6.500C6 5.500 4.500 7 3.300 6.500Z" fill="#cb2c1c" /></svg>Follow Up<span className="ml-[5px]"><Down color="#666" w={5} /></span></div>
          <div className="flex h-[22px] items-center"><svg width="12" height="13" viewBox="0 0 12 13" className="mr-[5px]"><path d="M3 2C3 -.3 8 -.3 8 2L6.300 8.500H4.700Z" fill="#e3411f" /><circle cx="5.500" cy="11.200" r="1.600" fill="#e3411f" /></svg><span className="whitespace-nowrap">High Importance</span></div>
          <div className="flex h-[22px] items-center"><svg width="12" height="13" viewBox="0 0 12 13" className="mr-[5px]"><path d="M3 .5H7.500V6.500H10L5.300 12.300L.8 6.500H3Z" fill="#3f7be0" stroke="#2556ab" strokeWidth=".8" /></svg><span className="whitespace-nowrap">Low Importance</span></div>
        </div>
      </Group>
      <Group w={51} label="Zoom">
        <Big w={51} grey a="Zoom" icon={
          <svg width="20" height="30" viewBox="0 0 20 30"><circle cx="9.500" cy="9.500" r="8" fill="#e9e9eb" stroke="#b5b5b7" strokeWidth="1.800" /><path d="M13 17L17 28" stroke="#b0b0b2" strokeWidth="3.500" /><path d="M5 9C5 6 7 4.500 10 4.500" stroke="#fff" strokeWidth="1.500" fill="none" /></svg>} />
      </Group>
    </div>
  );
}

const btn = "flex items-center justify-center rounded-[2px] border border-[#b1b6bd] bg-gradient-to-b from-[#f9fafb] to-[#e6eaef] text-[11.500px]";
const field = "flex h-[21px] items-center border border-[#989898] bg-white pl-[3px] text-[11.500px] text-black";

function Address() {
  return (
    <div className="flex shrink-0 pl-[6px] pr-[6px] pt-[13px] text-[#3b3b3b]">
      <div className={`h-[75px] w-[49px] flex-col pt-[4px] ${btn}`}>
        <svg width="29" height="15" viewBox="0 0 29 15"><rect x="4.500" y=".5" width="24" height="13" fill="#fff" stroke="#7d8ea8" /><path d="M10 8.500H20M12 10.500H18" stroke="#5d80bb" /><rect x="24" y="2" width="3" height="4" fill="#d9532c" /><path d="M0 1.500H3M1 4.500H3M0 7.500H3M1 10.500H3M0 13H3" stroke="#7d8ea8" /></svg>
        <span className="pr-[5px] leading-[20px]"><u>S</u>end</span>
      </div>
      <div className="ml-[9px] flex w-[59px] flex-col">
        <div className={`h-[23px] w-[50px] ${btn}`}>To<u>.</u>..</div>
        <div className={`mt-[3px] h-[23px] w-[50px] ${btn}`}><u>C</u>c...</div>
        <div className="mt-[5px] text-[11.200px] leading-[20px] tracking-[-0.1px] text-[#4a4f5b]">S<u>u</u>bject:</div>
      </div>
      <div className="flex flex-1 flex-col gap-[5px] pt-[2px]">
        <div className={field}><div className="h-[13px] w-px bg-black" /></div>
        <div className={field} />
        <div className={`${field} tracking-[-0.3px]`}>Paediatric Rota w/c 10/05/2021</div>
      </div>
    </div>
  );
}

const heads: [string, string, number][] = [
  ["Ward", "bg-[#ffff00] text-black", 251],
  ["PAU", "bg-[#ffc000] text-black", 250],
  ["NNU", "bg-[#00b0f0] text-black", 251],
  ["Night", "bg-black text-white", 251],
];

function MailRow({ d, date, w, ml, mt, h }: { d: string; date: string; w: number; ml: number; mt: number; h: number }) {
  return (
    <div className="relative flex h-[136px] shrink-0 border-b border-l border-black text-[14px] text-black">
      <div className="flex w-[54px] items-center justify-center border-r border-black pl-px">{d}</div>
      <div className="flex w-[127px] items-center justify-center border-r border-black tracking-[0.15px]">{date}</div>
      {heads.map(([t, , cw]) => (
        <div key={t} className="border-r border-black" style={{ width: cw }} />
      ))}
      <div className="absolute bg-black" style={{ left: ml, top: mt, width: w, height: h }} />
    </div>
  );
}

function ScrollBtn({ dir, w, h }: { dir: "up" | "down" | "left" | "right"; w: number; h: number }) {
  return (
    <div className="flex shrink-0 items-center justify-center rounded-[2px] border border-[#b5bac1] bg-gradient-to-b from-[#f8f8f8] to-[#e6e6e6]" style={{ width: w, height: h }}>
      <Tri dir={dir} color="#3d4a72" />
    </div>
  );
}

function MailBody() {
  return (
    <div className="relative mx-[6px] mt-[3px] flex h-[495px] shrink-0 border border-[#a3abb7] bg-white">
      <div className="flex w-[1393px] flex-col">
        <div className="relative h-[476px] overflow-hidden pl-[10px] font-['Liberation_Serif'] text-[16px] text-black">
          <div className="pt-[15px] leading-[20px] tracking-[-0.1px]">Dear all,</div>
          <div className="pt-[18px] leading-[20px]">Please find the weekly rota for the week commencing 10/05/2021 below. Please let me know if anything doesn't look right.</div>
          <div className="mt-[34px] flex w-[1500px] flex-col font-['Open_Sans']">
            <div className="flex h-[28px] border-y border-l border-black text-[16px] font-bold">
              <div className="w-[181px] border-r border-black bg-[#d9d9d9]" />
              {heads.map(([t, c, w]) => (
                <div key={t} className={`flex items-center justify-center border-r border-black pl-px pt-[2px] ${c}`} style={{ width: w }}>{t}</div>
              ))}
              <div className="flex-1 bg-[#da9694]" />
            </div>
            <MailRow d="MON" date="10/05/2021" ml={181} mt={1} w={897} h={133} />
            <MailRow d="TUE" date="11/05/2021" ml={183} mt={0} w={937} h={135} />
            <MailRow d="WED" date="12/05/2021" ml={179} mt={3} w={926} h={120} />
          </div>
          <div className="absolute left-[78px] top-[24px] flex h-[22px] w-[173px] items-center bg-[#f6fbfe] pl-[32px] font-['Open_Sans'] text-[11.500px] text-[#ebe9e9]">Full-screen Snip</div>
        </div>
        <div className="flex h-[17px] bg-gradient-to-b from-[#efefef] to-[#fcfcfc] pt-px">
          <ScrollBtn dir="left" w={17} h={16} />
          <div className="flex h-4 w-[1301px] items-center justify-center rounded-[2px] border border-[#b5bac1] bg-gradient-to-b from-[#f6f6f6] to-[#e4e4e4]"><Grip /></div>
          <div className="flex-1" />
          <ScrollBtn dir="right" w={17} h={16} />
        </div>
      </div>
      <div className="flex w-[17px] flex-col items-center bg-gradient-to-r from-[#efefef] to-[#fcfcfc]">
        <div className="flex h-[23px] w-full flex-col items-center bg-[#dde1e8]">
          <div className="mt-[2px] h-[2px] w-[9px] bg-[#7d828a]" />
          <svg width="13" height="13" viewBox="0 0 13 13" className="mt-[4px]"><path d="M.5 2.500H11.500V9.500H.5Z" fill="#f0eef4" stroke="#6a707a" /><path d="M1.500 .5H5.500V4L3.500 5L1.500 3ZM5.500 9L7.500 7L9.500 9V12H5.500Z" fill="#fff" stroke="#4c525c" /></svg>
        </div>
        <ScrollBtn dir="up" w={15} h={17} />
        <div className="flex h-[184px] w-[15px] items-center justify-center rounded-[2px] border border-[#b5bac1] bg-gradient-to-r from-[#f6f6f6] to-[#e4e4e4]"><Grip vertical /></div>
        <div className="flex-1" />
        <ScrollBtn dir="down" w={15} h={17} />
        <div className="h-[17px] w-full bg-[#f4f4f4]" />
      </div>
      {/* lower part of the third redaction, over the scrollbar */}
      <div className="absolute left-[190px] top-[470px] h-[11px] w-[926px] bg-black" />
    </div>
  );
}

function MessageWindow() {
  return (
    <div className="absolute left-[290px] top-[74px] flex h-[773px] w-[1426px] flex-col border border-t-0 border-white bg-[#e9ecf1] shadow-[0_5px_20px_2px_rgba(0,0,0,0.4)]">
      <div className="flex shrink-0 flex-col bg-white"><MsgTitle /><MsgTabs /></div>
      <Ribbon />
      <Address />
      <MailBody />
      <div className="mt-[7px] flex flex-1 flex-col bg-[#f1f2f4] px-[6px]">
        <div className="h-[5px] border border-[#a3abb7] bg-[#dfe3e9]" />
        <svg width="9" height="7" viewBox="0 0 9 7" className="mr-[4px] mt-[13px] self-end"><path d="M1 5.500L4.500 2L8 5.500" fill="none" stroke="#333" strokeWidth="2.200" /></svg>
      </div>
    </div>
  );
}

export default function App() {
  return (
    <div className="relative flex h-[1080px] w-[1920px] flex-col overflow-hidden bg-white font-['Open_Sans','Noto_Sans',sans-serif]">
      <ExcelTitle />
      <ExcelTabs />
      <FormulaBar />
      <div className="-mt-px flex min-h-0 flex-1">
        <div className="flex w-[1900px] flex-col"><ColumnHeaders /><Sheet /></div>
        <ExcelVScroll />
      </div>
      <SheetTabs />
      <StatusBar />
      <Taskbar />
      {/* redaction over Sunday's names */}
      <div className="absolute left-[261px] top-[870px] h-[129px] w-[794px] bg-black" />
      <MessageWindow />
      {/* redaction over the first rota column */}
      <div className="absolute left-[263px] top-[194px] h-[31px] w-[26px] bg-black" />
      <div className="absolute left-[263px] top-[225px] h-[592px] w-[29px] bg-black" />
    </div>
  );
}
